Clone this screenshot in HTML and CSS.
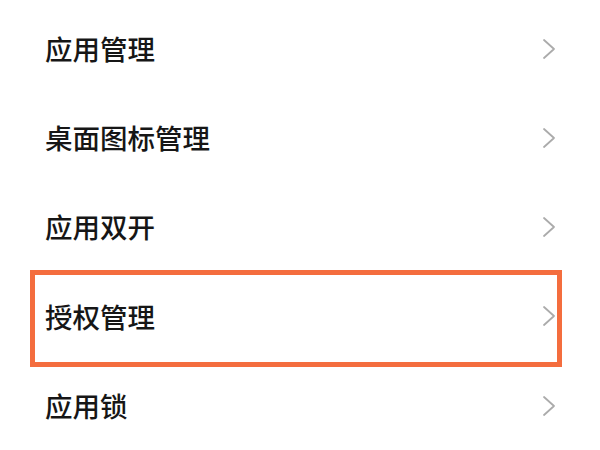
FILE: index.html
```html
<!DOCTYPE html>
<html lang="zh-CN">
<head>
<meta charset="utf-8">
<link rel="stylesheet" href="styles.css">
</head>
<body>
<ul class="menu">
  <li class="row"><span class="label">应用管理</span><svg class="chev" viewBox="0 0 14 22" width="14" height="22"><path d="M2 2 L12 11 L2 20"/></svg></li>
  <li class="row"><span class="label">桌面图标管理</span><svg class="chev" viewBox="0 0 14 22" width="14" height="22"><path d="M2 2 L12 11 L2 20"/></svg></li>
  <li class="row"><span class="label">应用双开</span><svg class="chev" viewBox="0 0 14 22" width="14" height="22"><path d="M2 2 L12 11 L2 20"/></svg></li>
  <li class="row highlight"><span class="label">授权管理</span><svg class="chev" viewBox="0 0 14 22" width="14" height="22"><path d="M2 2 L12 11 L2 20"/></svg></li>
  <li class="row"><span class="label">应用锁</span><svg class="chev" viewBox="0 0 14 22" width="14" height="22"><path d="M2 2 L12 11 L2 20"/></svg></li>
</ul>
</body>
</html>
```

FILE: styles.css
```css
html, body {
  margin: 0;
  padding: 0;
  background: #ffffff;
  width: 600px;
  height: 450px;
  overflow: hidden;
}

.menu {
  list-style: none;
  margin: 0;
  padding: 4px 0 0 0;
}

.row {
  position: relative;
  height: 89.25px;
  display: flex;
  align-items: center;
  justify-content: space-between;
  padding: 0 44px 0 45px;
}

.label {
  font-family: "Noto Sans CJK SC", "Noto Sans", sans-serif;
  font-size: 27.5px;
  font-weight: 500;
  color: #161616;
  line-height: 1;
}

.chev {
  display: block;
  fill: none;
  stroke: #ababab;
  stroke-width: 1.8;
  stroke-linecap: round;
  stroke-linejoin: round;
}

.highlight::after {
  content: "";
  position: absolute;
  left: 30px;
  right: 38px;
  top: -2px;
  bottom: -6px;
  border: 5px solid #f46d3e;
  box-sizing: border-box;
  pointer-events: none;
}
```
